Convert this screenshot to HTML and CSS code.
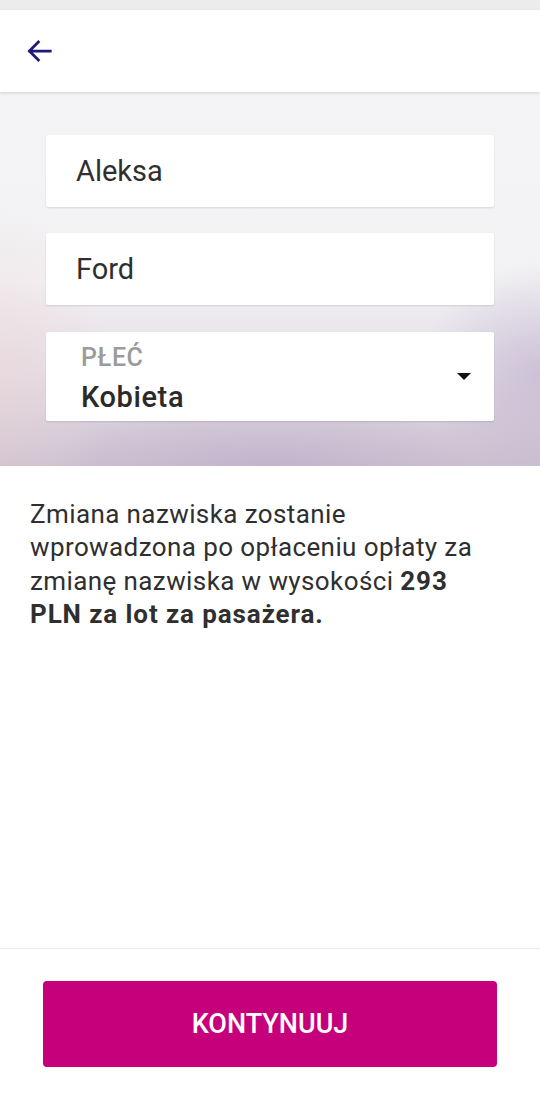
FILE: index.html
```html
<!DOCTYPE html>
<html lang="pl">
<head>
<meta charset="utf-8">
<link rel="stylesheet" href="styles.css">
</head>
<body>
<div class="screen">
  <div class="status"></div>
  <header class="appbar">
    <svg class="back" viewBox="0 0 24 24" width="30" height="30" aria-hidden="true">
      <path d="M21 12H4.5M11.5 4.8L4.3 12l7.2 7.2" fill="none" stroke="#1d1a78" stroke-width="2.2" stroke-linecap="square"/>
    </svg>
  </header>
  <section class="hero">
    <div class="field">Aleksa</div>
    <div class="field">Ford</div>
    <div class="field select">
      <div class="select-text">
        <span class="label">PŁEĆ</span>
        <span class="value">Kobieta</span>
      </div>
      <span class="caret"></span>
    </div>
  </section>
  <p class="info">Zmiana nazwiska zostanie wprowadzona po opłaceniu opłaty za zmianę nazwiska w wysokości <b>293 PLN za lot za pasażera.</b></p>
  <div class="spacer"></div>
  <footer class="footer">
    <button class="btn">KONTYNUUJ</button>
  </footer>
</div>
</body>
</html>
```
FILE: styles.css
```css
html, body {
  margin: 0;
  padding: 0;
  background: #fff;
}
.screen {
  width: 540px;
  height: 1094px;
  display: flex;
  flex-direction: column;
  font-family: Roboto, "Noto Sans", sans-serif;
  color: #2f2f2f;
  overflow: hidden;
}
.status {
  height: 10px;
  background: #ececec;
  flex: none;
}
.appbar {
  height: 82px;
  flex: none;
  background: #fff;
  display: flex;
  align-items: center;
  padding-left: 24px;
  box-shadow: 0 1px 3px rgba(0,0,0,0.14);
  position: relative;
  z-index: 2;
}
.back {
  display: block;
}
.hero {
  height: 374px;
  flex: none;
  box-sizing: border-box;
  padding: 43px 46px 0;
  display: flex;
  flex-direction: column;
  gap: 26px;
  background:
    radial-gradient(ellipse 110px 180px at 0% 78%, rgba(236,212,212,0.5), rgba(236,212,212,0) 100%),
    radial-gradient(ellipse 220px 70px at 50% 100%, rgba(185,165,198,0.45), rgba(185,165,198,0) 100%),
    radial-gradient(ellipse 120px 110px at 100% 75%, rgba(180,165,198,0.5), rgba(180,165,198,0) 100%),
    linear-gradient(to bottom, #f4f4f6 0%, #f2f1f3 50%, #e4dee7 75%, #cbc0d0 100%);
}
.field {
  background: #fff;
  height: 72px;
  flex: none;
  border-radius: 2px;
  box-shadow: 0 1px 2px rgba(0,0,0,0.12);
  display: flex;
  align-items: center;
  padding-left: 30px;
  font-size: 29px;
  color: #2f2f2f;
  box-sizing: border-box;
}
.field.select {
  height: 89px;
  padding: 12px 23px 0 35px;
  justify-content: space-between;
  align-items: flex-start;
  margin-top: 1px;
}
.select-text {
  display: flex;
  flex-direction: column;
}
.label {
  font-size: 25px;
  font-weight: 500;
  letter-spacing: 0.6px;
  color: #9b9b9b;
  line-height: 28px;
}
.value {
  font-size: 29px;
  font-weight: 500;
  letter-spacing: 0.6px;
  color: #2a2a2a;
  line-height: 36px;
  margin-top: 7px;
}
.caret {
  width: 0;
  height: 0;
  border-left: 7px solid transparent;
  border-right: 7px solid transparent;
  border-top: 7px solid #111;
  margin-top: 29px;
}
.info {
  margin: 32px 0 0;
  padding: 0 50px 0 30px;
  font-size: 26px;
  letter-spacing: 0.4px;
  line-height: 33.4px;
  color: #2f2f2f;
}
.info b {
  font-weight: 700;
  letter-spacing: 0.9px;
}
.spacer {
  flex: 1;
}
.footer {
  flex: none;
  height: 146px;
  border-top: 1px solid #ececec;
  box-sizing: border-box;
  padding: 32px 43px 0;
}
.btn {
  display: block;
  width: 100%;
  height: 86px;
  border: 0;
  border-radius: 4px;
  background: #c6007b;
  color: #fff;
  font-family: Roboto, "Noto Sans", sans-serif;
  font-size: 27px;
  font-weight: 500;
}
```
